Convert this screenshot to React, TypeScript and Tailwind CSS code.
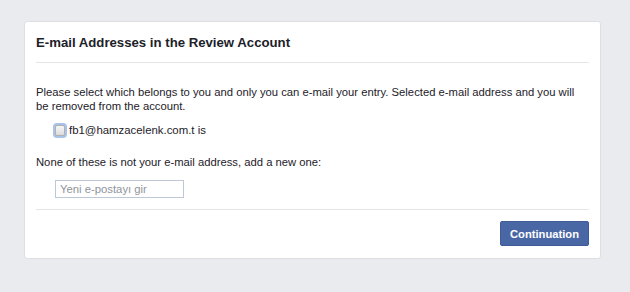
import React from "react";

export default function App() {
  return (
    <div
      className="w-[630px] h-[292px] bg-[#e9ebee] pt-[21px] pl-[24px]"
      style={{ fontFamily: '"Liberation Sans", Arial, Helvetica, sans-serif' }}
    >
      <div className="w-[577px] h-[238px] bg-white border border-[#dddfe2] rounded-[3px] px-[11px] text-[#1d2129]">
        <div className="h-[41px] border-b border-[#e5e5e5] flex items-center">
          <h2 className="text-[13.2px] font-bold leading-[18px] pt-[1px]">
            E-mail Addresses in the Review Account
          </h2>
        </div>
        <div className="h-[147px] border-b border-[#e5e5e5] pt-[22px]">
          <p className="text-[11.25px] leading-[14px]">
            Please select which belongs to you and only you can e-mail your entry. Selected e-mail address and you will be removed from the account.
          </p>
          <div className="mt-[9px] ml-[17px] flex items-center h-[16px]">
            <div className="w-[14px] h-[15px] rounded-[4px] bg-[#a8c2ea] p-[2px]">
              <div className="w-full h-full rounded-[2px] border border-[#b1b1b1] bg-gradient-to-b from-[#f6f6f6] to-[#dcdcdc]" />
            </div>
            <span className="ml-[2px] text-[11.4px] leading-[14px]">fb1@hamzacelenk.com.t is</span>
          </div>
          <p className="mt-[17px] text-[11.25px] leading-[14px]">
            None of these is not your e-mail address, add a new one:
          </p>
          <div className="mt-[11px] ml-[19px] w-[129px] h-[18px] border border-[#bdc7d8] flex items-center px-[4px]">
            <span className="text-[11.3px] leading-[14px] text-[#90949c]">Yeni e-postayı gir</span>
          </div>
        </div>
        <div className="pt-[11px] flex justify-end">
          <button className="w-[89px] h-[25px] rounded-[2px] bg-[#4a67a5] border border-[#3f5c98] text-white text-[11.2px] font-bold leading-[14px]">
            Continuation
          </button>
        </div>
      </div>
    </div>
  );
}
